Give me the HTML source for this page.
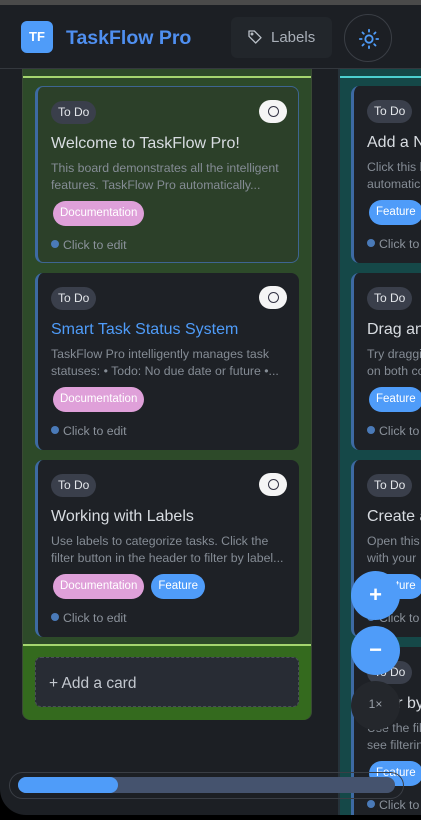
<!DOCTYPE html>
<html><head><meta charset="utf-8"><style>
*{box-sizing:border-box;margin:0;padding:0}
html,body{width:421px;height:820px;overflow:hidden;background:#000;font-family:"Liberation Sans","DejaVu Sans",sans-serif}
.top{position:absolute;left:0;top:0;width:421px;height:5px;background:#4a4a4a}
.page{position:absolute;left:0;top:5px;width:421px;height:810px;background:#1c1f24;border-radius:0 0 0 26px;overflow:hidden}
.hdr{position:absolute;left:0;top:0;width:421px;height:64px;border-bottom:1px solid #34383e;background:#1c1f24;z-index:2}
.logo{position:absolute;left:21px;top:16px;width:32px;height:32px;border-radius:6px;background:#4f9cf9;color:#fff;font-weight:bold;font-size:13px;line-height:32px;text-align:center}
.title{position:absolute;left:66px;top:22px;color:#4f8ff0;font-weight:bold;font-size:19.5px}
.lab{position:absolute;left:231px;top:12px;width:101px;height:41px;background:#22262b;border-radius:6px;color:#a9afb8;font-size:15px;line-height:41px;padding-left:40px}
.lab svg{position:absolute;left:16px;top:12px}
.theme{position:absolute;left:344px;top:9px;width:48px;height:48px;border-radius:50%;border:1px solid #3a3e45}
.theme svg{position:absolute;left:13px;top:13px}
.col{position:absolute;top:64px;border-radius:0 0 8px 8px}
.c1{left:22px;width:290px;height:651px;background:#2d4a29;border:1px solid #3a4a35;border-top:0}
.c1 .ln{position:absolute;left:0;top:7px;width:100%;height:2px;background:#a5d66f}
.c2{left:338px;width:90px;height:760px;background:#154848;border-left:2px solid #26323a}
.c2 .ln{position:absolute;left:0;top:7px;width:100%;height:2px;background:#4ccfd0}
.card{position:absolute;width:264px;height:177px;border-radius:8px;background:#1e2126;border-left:3px solid #3d6aa3;overflow:hidden}
.card.hl{background:#2c4029;border:1px solid #3e6591;border-left:3px solid #3d6aa3}
.pill{position:absolute;left:13px;top:14px;height:23px;padding:0 7px;border-radius:12px;background:#3a3f4b;color:#e3e6ea;font-size:12px;line-height:23px}
.ck{position:absolute;left:221px;top:13px;width:28px;height:23px;border-radius:12px;background:#f5f5f5}
.ck:after{content:"";position:absolute;left:9px;top:6px;width:9px;height:9px;border:1.3px solid #334;border-radius:50%}
.ct{position:absolute;left:13px;top:48px;font-size:16px;color:#d8dce1;white-space:nowrap}
.ds{position:absolute;left:13px;top:73px;width:240px;font-size:12.3px;line-height:16.5px;color:#858c95;white-space:nowrap}
.tags{position:absolute;left:15px;top:114px;white-space:nowrap}
.tag{display:inline-block;height:25px;line-height:25px;padding:0 7px;border-radius:13px;font-size:11.5px;color:#fff;margin-right:7px}
.doc{background:#dfa0d9}.fe{background:#4f9cf9}
.ed{position:absolute;left:13px;top:151px;font-size:12.3px;color:#8b929b;white-space:nowrap}
.ed:before{content:"";display:inline-block;width:8px;height:8px;border-radius:50%;background:#4a7ab8;margin-right:4px;vertical-align:1px}
.foot{position:absolute;left:0;top:575px;width:100%;height:76px;background:#346a1e;border-top:2px solid #a5d66f;border-radius:0 0 8px 8px}
.add{position:absolute;left:12px;top:11px;width:264px;height:50px;border:1px dashed #4a4f58;border-radius:6px;background:#282c34;color:#c3c8cf;font-size:15.5px;line-height:52px;padding-left:13px}
.fab{position:absolute;left:351px;width:49px;height:49px;border-radius:50%;background:#4f9cf9;color:#fff;text-align:center;font-size:22px;line-height:47px;font-weight:bold}
.sb{position:absolute;left:9px;top:767px;width:395px;height:27px;border:1px solid #3a3e45;border-radius:14px}
.tr{position:absolute;left:8px;top:4px;width:377px;height:16px;border-radius:8px;background:#45536e}
.th{position:absolute;left:0;top:0;width:100px;height:16px;border-radius:8px;background:#4f9cf9}
</style></head><body>
<div class="top"></div>
<div class="page">
<div class="hdr">
<div class="logo">TF</div><div class="title">TaskFlow Pro</div>
<div class="lab"><svg width="16" height="16" viewBox="0 0 24 24" fill="none" stroke="#b8bec6" stroke-width="2" stroke-linejoin="round"><path d="M3 3h8l10 10-8 8L3 11z"/><circle cx="7.5" cy="7.5" r="1.2"/></svg>Labels</div>
<div class="theme"><svg width="22" height="22" viewBox="0 0 24 24" fill="none" stroke="#4f9cf9" stroke-width="2" stroke-linecap="round"><circle cx="12" cy="12" r="4"/><path d="M12 2v2M12 20v2M2 12h2M20 12h2M4.9 4.9l1.4 1.4M17.7 17.7l1.4 1.4M4.9 19.1l1.4-1.4M17.7 6.3l1.4-1.4"/></svg></div>
</div>
<div class="col c1"><div class="ln"></div>
<div class="card hl" style="left:12px;top:17px"><div class="pill">To Do</div><div class="ck"></div><div class="ct">Welcome to TaskFlow Pro!</div><div class="ds">This board demonstrates all the intelligent<br>features. TaskFlow Pro automatically...</div><div class="tags"><span class="tag doc">Documentation</span></div><div class="ed">Click to edit</div></div>
<div class="card" style="left:12px;top:204px"><div class="pill">To Do</div><div class="ck"></div><div class="ct" style="color:#4f9cf9">Smart Task Status System</div><div class="ds">TaskFlow Pro intelligently manages task<br>statuses: • Todo: No due date or future •...</div><div class="tags"><span class="tag doc">Documentation</span></div><div class="ed">Click to edit</div></div>
<div class="card" style="left:12px;top:391px"><div class="pill">To Do</div><div class="ck"></div><div class="ct">Working with Labels</div><div class="ds">Use labels to categorize tasks. Click the<br>filter button in the header to filter by label...</div><div class="tags"><span class="tag doc">Documentation</span><span class="tag fe">Feature</span></div><div class="ed">Click to edit</div></div>
<div class="foot"><div class="add">+ Add a card</div></div>
</div>
<div class="col c2"><div class="ln"></div>
<div class="card" style="left:11px;top:17px"><div class="pill">To Do</div><div class="ct">Add a New Card</div><div class="ds">Click this button to add<br>automatically</div><div class="tags"><span class="tag fe">Feature</span></div><div class="ed">Click to edit</div></div>
<div class="card" style="left:11px;top:204px"><div class="pill">To Do</div><div class="ct">Drag and Drop</div><div class="ds">Try dragging cards<br>on both columns</div><div class="tags"><span class="tag fe">Feature</span></div><div class="ed">Click to edit</div></div>
<div class="card" style="left:11px;top:391px"><div class="pill">To Do</div><div class="ct">Create a Card</div><div class="ds">Open this card<br>with your</div><div class="tags"><span class="tag fe">Feature</span></div><div class="ed">Click to edit</div></div>
<div class="card" style="left:11px;top:578px"><div class="pill">To Do</div><div class="ct">Filter by Label</div><div class="ds">Use the filter<br>see filtering</div><div class="tags"><span class="tag fe">Feature</span></div><div class="ed">Click to edit</div></div>
</div>
<div class="fab" style="top:566px">+</div>
<div class="fab" style="top:621px">−</div>
<div class="fab" style="top:676px;background:#24272c;color:#9aa0a8;font-size:12px;font-weight:normal">1×</div>
<div class="sb"><div class="tr"><div class="th"></div></div></div>
</div>
</body></html>
